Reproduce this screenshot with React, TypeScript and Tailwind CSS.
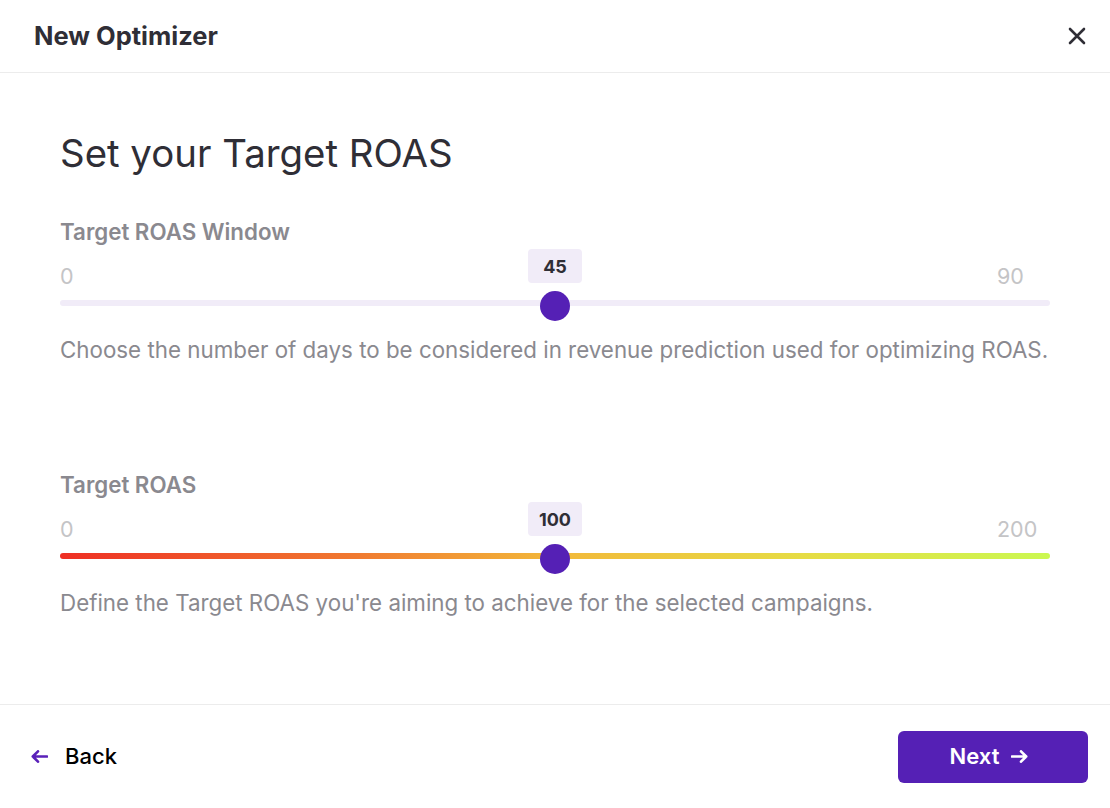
import React from "react";

function ArrowLeft({ className }: { className?: string }) {
  return (
    <svg className={className} width="17" height="13" viewBox="0 0 17 13" fill="none">
      <path d="M16 6.5H1.8M7 1.3L1.8 6.5L7 11.7" stroke="currentColor" strokeWidth="2.6" strokeLinecap="round" strokeLinejoin="round" />
    </svg>
  );
}

function ArrowRight({ className }: { className?: string }) {
  return (
    <svg className={className} width="17" height="13" viewBox="0 0 17 13" fill="none">
      <path d="M1 6.5H15.2M10 1.3L15.2 6.5L10 11.7" stroke="currentColor" strokeWidth="2.6" strokeLinecap="round" strokeLinejoin="round" />
    </svg>
  );
}

function CloseIcon() {
  return (
    <svg width="18" height="18" viewBox="0 0 18 18" fill="none">
      <path d="M2 2L16 16M16 2L2 16" stroke="#2f2e36" strokeWidth="2.6" strokeLinecap="round" />
    </svg>
  );
}

type SliderProps = {
  label: string;
  min: number;
  max: number;
  value: number;
  description: string;
  gradient?: boolean;
  className?: string;
};

function SliderSection({ label, min, max, value, description, gradient, className }: SliderProps) {
  const pct = ((value - min) / (max - min)) * 100;
  return (
    <section className={className}>
      <div className="text-[22.3px] leading-[28px] font-semibold text-[#8a898f]">{label}</div>
      <div className="mt-[16px] flex justify-between text-[21.5px] leading-[28px] text-[#c4c4c6]">
        <span>{min}</span>
        <span className="w-[53px] text-left">{max}</span>
      </div>
      <div className="relative mt-[10px] h-[6px]">
        <div
          className={
            gradient
              ? "h-[6px] rounded-full bg-[linear-gradient(to_right,#ee2f24_0%,#f07a30_30%,#f2b83a_50%,#e6dc44_75%,#cbf851_100%)]"
              : "h-[6px] rounded-full bg-[#f1ecf8]"
          }
        />
        <div
          className="absolute top-[-51px] w-[54px] h-[34px] rounded-[4px] bg-[#f1ecf8] flex items-center justify-center text-[18px] font-bold text-[#2f2e36]"
          style={{ left: `calc(${pct}% - 27px)` }}
        >
          {value}
        </div>
        <div
          className="absolute top-[-9px] w-[30px] h-[30px] rounded-full bg-[#5520b5]"
          style={{ left: `calc(${pct}% - 15px)` }}
        />
      </div>
      <p className="mt-[30px] text-[22.35px] leading-[28px] text-[#8a898f] whitespace-nowrap">{description}</p>
    </section>
  );
}

export default function App() {
  return (
    <div className="w-[1110px] h-[808px] bg-white flex flex-col font-['Inter','Noto_Sans',sans-serif]">
      <header className="h-[73px] shrink-0 border-b border-[#ececec] flex items-center justify-between pl-[34px] pr-[22px]">
        <h1 className="text-[25.5px] leading-[32px] font-bold text-[#2f2e36]">New Optimizer</h1>
        <button className="w-[22px] h-[22px] flex items-center justify-center">
          <CloseIcon />
        </button>
      </header>

      <main className="flex-1 px-[60px] pt-[57px]">
        <h2 className="text-[38.4px] leading-[46px] font-normal text-[#2f2e36]">Set your Target ROAS</h2>
        <SliderSection
          className="mt-[42px]"
          label="Target ROAS Window"
          min={0}
          max={90}
          value={45}
          description="Choose the number of days to be considered in revenue prediction used for optimizing ROAS."
        />
        <SliderSection
          className="mt-[107px]"
          label="Target ROAS"
          min={0}
          max={200}
          value={100}
          gradient
          description="Define the Target ROAS you're aiming to achieve for the selected campaigns."
        />
      </main>

      <footer className="h-[104px] shrink-0 border-t border-[#ececec] flex items-center justify-between pl-[31px] pr-[22px]">
        <button className="flex items-center gap-[17px] text-[22px] font-medium text-black">
          <ArrowLeft className="text-[#5a21b9]" />
          <span>Back</span>
        </button>
        <button className="w-[190px] h-[52px] rounded-[6px] bg-[#5520b5] flex items-center justify-center gap-[12px] text-white text-[22px] font-semibold pr-[8px]">
          <span>Next</span>
          <ArrowRight />
        </button>
      </footer>
    </div>
  );
}
